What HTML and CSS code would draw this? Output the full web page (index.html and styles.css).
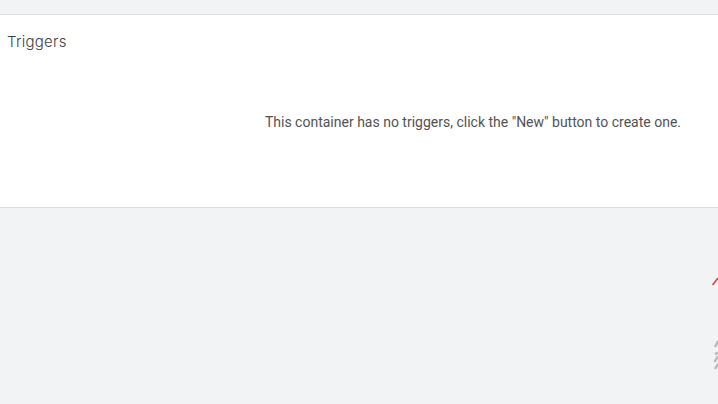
FILE: index.html
```html
<!DOCTYPE html>
<html lang="en">
<head>
<meta charset="utf-8">
<title>Triggers</title>
<link rel="stylesheet" href="styles.css">
</head>
<body>
<div class="top-band"></div>
<section class="card">
  <h2 class="card-title">Triggers</h2>
  <p class="empty">This container has no triggers, click the "New" button to create one.</p>
</section>
<svg class="edge-marks" width="8" height="100" viewBox="0 0 8 100" aria-hidden="true">
  <path d="M2.5 8 L8 1" stroke="#c9483c" stroke-width="1.8" fill="none" opacity=".9"/>
  <path d="M5 70 L8 64 M5 77 L8 76 M4.5 85 L8 79 M5 92 L8 87" stroke="#a9abad" stroke-width="2.4" fill="none" opacity=".8"/>
</svg>
</body>
</html>
```
FILE: styles.css
```css
html, body {
  margin: 0;
  height: 100%;
  overflow: hidden;
}
body {
  position: relative;
  background: #f1f3f4;
  font-family: Roboto, "Liberation Sans", sans-serif;
}
.top-band {
  height: 14px;
}
.card {
  height: 192px;
  background: #fff;
  border-top: 1px solid #dadce0;
  border-bottom: 1px solid #dadce0;
  padding: 0 37px 0 7px;
}
.card-title {
  margin: 0;
  padding-top: 17px;
  font-family: Inter, sans-serif;
  font-size: 15px;
  line-height: 20px;
  font-weight: 300;
  letter-spacing: 0.25px;
  color: #3c4043;
}
.empty {
  margin: 0;
  padding-top: 60px;
  font-size: 14px;
  line-height: 20px;
  color: #525252;
  text-align: right;
}
.edge-marks {
  position: absolute;
  right: 0;
  top: 277px;
}
```
